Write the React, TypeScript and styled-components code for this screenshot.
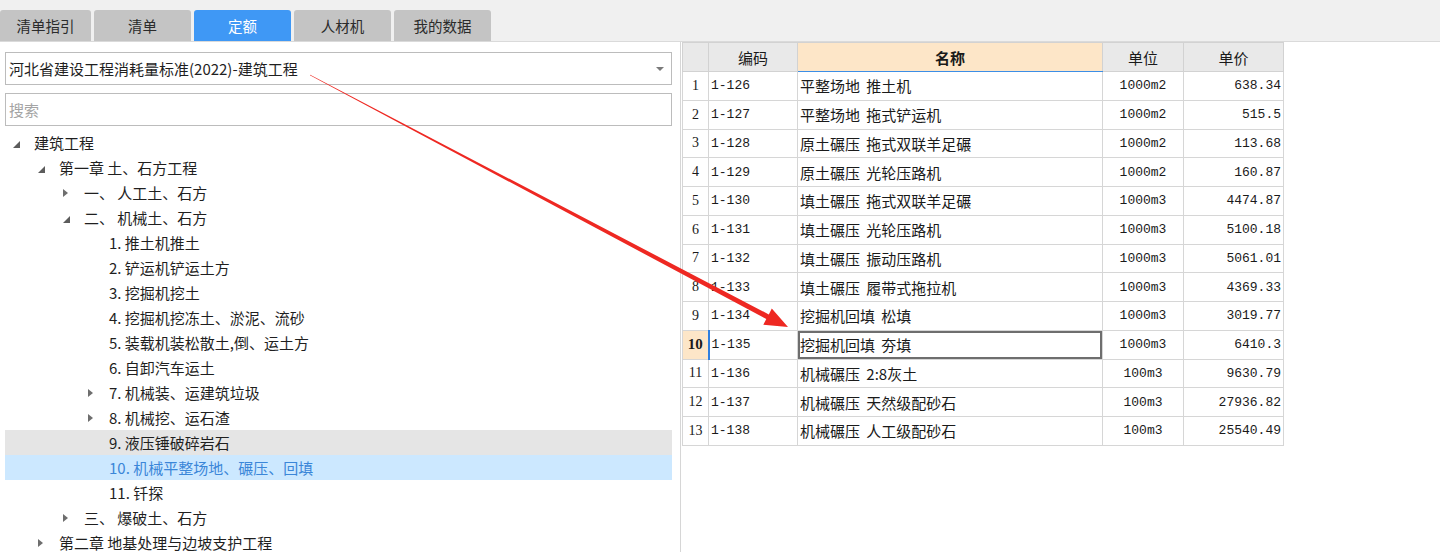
import styled, { createGlobalStyle } from 'styled-components';

const GlobalStyle = createGlobalStyle`
  html, body { margin: 0; padding: 0; background: #fff; }
  body {
    font-family: "Noto Sans CJK SC", "Noto Sans", sans-serif;
    color: #1f1f1f;
    overflow: hidden;
  }
`;

const Page = styled.div`
  position: relative;
  width: 1440px;
  height: 552px;
  overflow: hidden;
  background: #fff;
`;

const TabBar = styled.div`
  height: 41px;
  display: flex;
  align-items: flex-end;
  gap: 3px;
  background: #f0f0f0;
  border-bottom: 1px solid #dadada;
`;

const Tab = styled.div<{ $active?: boolean; $w: number }>`
  width: ${(p) => p.$w}px;
  height: 31px;
  display: flex;
  align-items: center;
  justify-content: center;
  border-radius: 3px 3px 0 0;
  background: ${(p) => (p.$active ? '#3f98f5' : '#c4c4c4')};
  color: ${(p) => (p.$active ? '#fff' : '#2b2b2b')};
  font-size: 14.5px;
`;

const Body = styled.div`
  display: grid;
  grid-template-columns: 681px 1fr;
  height: 510px;
`;

const LeftPanel = styled.div`
  box-sizing: border-box;
  border-right: 1px solid #d6d6d6;
  padding: 10px 8px 0 5px;
  overflow: hidden;
`;

const Field = styled.div`
  box-sizing: border-box;
  height: 33px;
  border: 1px solid #bcbcbc;
  display: flex;
  align-items: center;
  justify-content: space-between;
  padding: 0 6px 0 3px;
  font-size: 15px;
  background: #fff;
  & + & { margin-top: 8px; }
`;

const Placeholder = styled.span`
  color: #a4a4a4;
`;

const Caret = styled.span`
  width: 0;
  height: 0;
  border-left: 4px solid transparent;
  border-right: 4px solid transparent;
  border-top: 4px solid #7a7a7a;
  margin-right: 1px;
`;

const Tree = styled.div`
  margin-top: 4px;
`;

const TreeRow = styled.div<{ $level: number; $hl?: 'hover' | 'selected' }>`
  height: 25px;
  display: flex;
  align-items: center;
  padding-left: ${(p) => p.$level * 25}px;
  font-size: 15px;
  background: ${(p) => (p.$hl === 'hover' ? '#e5e5e5' : p.$hl === 'selected' ? '#cce8ff' : 'transparent')};
  color: ${(p) => (p.$hl === 'selected' ? '#3b86d8' : '#1f1f1f')};
  white-space: pre;
`;

const Toggle = styled.span`
  width: 29px;
  height: 25px;
  flex: none;
  display: flex;
  align-items: center;
  padding-left: 8px;
  box-sizing: border-box;
`;

const RightPanel = styled.div`
  padding-left: 1px;
`;

const Grid = styled.table`
  border-collapse: collapse;
  table-layout: fixed;
  width: 601px;
  font-size: 14px;
  color: #1a1a1a;
`;

const Head = styled.th<{ $active?: boolean }>`
  height: 28px;
  border: 1px solid #d2d2d2;
  background: ${(p) => (p.$active ? '#fde6c8' : '#e9e9e9')};
  border-bottom: ${(p) => (p.$active ? '1px solid #3c8ee6' : '1px solid #d2d2d2')};
  font-weight: ${(p) => (p.$active ? 700 : 400)};
  font-size: 15px;
  padding: 0;
`;

const Row = styled.tr`
  height: 28.75px;
`;

const Cell = styled.td<{ $align?: 'left' | 'center' | 'right'; $mono?: boolean }>`
  border: 1px solid #d6d6d6;
  padding: 0 2px;
  text-align: ${(p) => p.$align ?? 'left'};
  font-family: ${(p) => (p.$mono ? '"Liberation Mono", "DejaVu Sans Mono", monospace' : '"Noto Sans CJK SC", sans-serif')};
  font-size: ${(p) => (p.$mono ? '13px' : '15px')};
  word-spacing: ${(p) => (p.$mono ? '0' : '3px')};
  white-space: nowrap;
  overflow: hidden;
`;

const NumCell = styled.td<{ $current?: boolean }>`
  border: 1px solid #d6d6d6;
  border-right: ${(p) => (p.$current ? '2px solid #2f7fe0' : '1px solid #d6d6d6')};
  background: ${(p) => (p.$current ? '#fde6c8' : '#fff')};
  text-align: center;
  padding: 0;
  font-family: "Liberation Serif", serif;
  font-size: ${(p) => (p.$current ? '15px' : '14px')};
  font-weight: ${(p) => (p.$current ? 700 : 400)};
`;

const NameCell = styled(Cell)<{ $focus?: boolean }>`
  box-shadow: ${(p) => (p.$focus ? 'inset 0 0 0 2px #6e6e6e' : 'none')};
`;

const Overlay = styled.svg`
  position: absolute;
  left: 0;
  top: 0;
  pointer-events: none;
`;

const tabs = [
  { label: '清单指引', w: 91 },
  { label: '清单', w: 97 },
  { label: '定额', w: 97, active: true },
  { label: '人材机', w: 97 },
  { label: '我的数据', w: 97 },
];

type Node = { level: number; text: string; state?: 'open' | 'closed'; hl?: 'hover' | 'selected' };

const tree: Node[] = [
  { level: 0, state: 'open', text: '建筑工程' },
  { level: 1, state: 'open', text: '第一章 土、石方工程' },
  { level: 2, state: 'closed', text: '一、 人工土、石方' },
  { level: 2, state: 'open', text: '二、 机械土、石方' },
  { level: 3, text: '1. 推土机推土' },
  { level: 3, text: '2. 铲运机铲运土方' },
  { level: 3, text: '3. 挖掘机挖土' },
  { level: 3, text: '4. 挖掘机挖冻土、淤泥、流砂' },
  { level: 3, text: '5. 装载机装松散土,倒、运土方' },
  { level: 3, text: '6. 自卸汽车运土' },
  { level: 3, state: 'closed', text: '7. 机械装、运建筑垃圾' },
  { level: 3, state: 'closed', text: '8. 机械挖、运石渣' },
  { level: 3, text: '9. 液压锤破碎岩石', hl: 'hover' },
  { level: 3, text: '10. 机械平整场地、碾压、回填', hl: 'selected' },
  { level: 3, text: '11. 钎探' },
  { level: 2, state: 'closed', text: '三、 爆破土、石方' },
  { level: 1, state: 'closed', text: '第二章 地基处理与边坡支护工程' },
];

const rows = [
  ['1-126', '平整场地 推土机', '1000m2', '638.34'],
  ['1-127', '平整场地 拖式铲运机', '1000m2', '515.5'],
  ['1-128', '原土碾压 拖式双联羊足碾', '1000m2', '113.68'],
  ['1-129', '原土碾压 光轮压路机', '1000m2', '160.87'],
  ['1-130', '填土碾压 拖式双联羊足碾', '1000m3', '4474.87'],
  ['1-131', '填土碾压 光轮压路机', '1000m3', '5100.18'],
  ['1-132', '填土碾压 振动压路机', '1000m3', '5061.01'],
  ['1-133', '填土碾压 履带式拖拉机', '1000m3', '4369.33'],
  ['1-134', '挖掘机回填 松填', '1000m3', '3019.77'],
  ['1-135', '挖掘机回填 夯填', '1000m3', '6410.3'],
  ['1-136', '机械碾压 2:8灰土', '100m3', '9630.79'],
  ['1-137', '机械碾压 天然级配砂石', '100m3', '27936.82'],
  ['1-138', '机械碾压 人工级配砂石', '100m3', '25540.49'],
];

function Arrow({ state }: { state?: 'open' | 'closed' }) {
  if (state === 'open')
    return (
      <svg width="7" height="7" viewBox="0 0 7 7" style={{ marginTop: 3 }}>
        <polygon points="7,0 7,7 0,7" fill="#5c5c5c" />
      </svg>
    );
  if (state === 'closed')
    return (
      <svg width="5" height="8" viewBox="0 0 5 8">
        <polygon points="0,0 5,4 0,8" fill="#6e6e6e" />
      </svg>
    );
  return null;
}

export default function App() {
  return (
    <Page>
      <GlobalStyle />
      <TabBar>
        {tabs.map((t) => (
          <Tab key={t.label} $w={t.w} $active={t.active}>
            {t.label}
          </Tab>
        ))}
      </TabBar>
      <Body>
        <LeftPanel>
          <Field>
            <span>河北省建设工程消耗量标准(2022)-建筑工程</span>
            <Caret />
          </Field>
          <Field>
            <Placeholder>搜索</Placeholder>
          </Field>
          <Tree>
            {tree.map((n, i) => (
              <TreeRow key={i} $level={n.level} $hl={n.hl}>
                <Toggle>
                  <Arrow state={n.state} />
                </Toggle>
                {n.text}
              </TreeRow>
            ))}
          </Tree>
        </LeftPanel>
        <RightPanel>
          <Grid>
            <colgroup>
              <col style={{ width: 26 }} />
              <col style={{ width: 89 }} />
              <col style={{ width: 305 }} />
              <col style={{ width: 81 }} />
              <col style={{ width: 100 }} />
            </colgroup>
            <thead>
              <tr>
                <Head />
                <Head>编码</Head>
                <Head $active>名称</Head>
                <Head>单位</Head>
                <Head>单价</Head>
              </tr>
            </thead>
            <tbody>
              {rows.map((r, i) => (
                <Row key={r[0]}>
                  <NumCell $current={i === 9}>{i + 1}</NumCell>
                  <Cell $mono>{r[0]}</Cell>
                  <NameCell $focus={i === 9}>{r[1]}</NameCell>
                  <Cell $mono $align="center">{r[2]}</Cell>
                  <Cell $mono $align="right">{r[3]}</Cell>
                </Row>
              ))}
            </tbody>
          </Grid>
        </RightPanel>
      </Body>
      <Overlay width="1440" height="552" viewBox="0 0 1440 552">
        <polygon
          points="310.1,74.7 768.8,314.4 771.8,308.6 788,327 763.3,324.8 766.3,319 309.9,75.3"
          fill="#ee2822"
        />
      </Overlay>
    </Page>
  );
}
